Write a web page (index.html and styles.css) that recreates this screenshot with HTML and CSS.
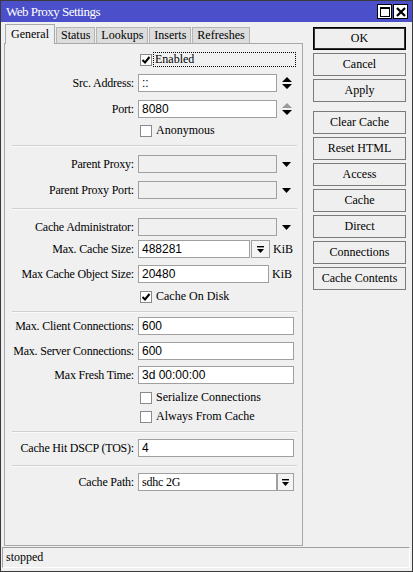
FILE: index.html
```html
<!DOCTYPE html>
<html>
<head>
<meta charset="utf-8">
<link rel="stylesheet" href="styles.css">
</head>
<body>
<div class="window">
  <div class="titlebar">
    <span class="title">Web Proxy Settings</span>
    <div class="tb-btns">
      <span class="tb-btn"><svg width="12" height="12" viewBox="0 0 12 12"><rect x="1.5" y="1.5" width="9" height="9" fill="none" stroke="#000" stroke-width="1"/><rect x="1" y="1" width="10" height="2" fill="#000"/></svg></span>
      <span class="tb-btn"><svg width="12" height="12" viewBox="0 0 12 12"><path d="M2 2 L10 10 M10 2 L2 10" stroke="#000" stroke-width="2.2"/></svg></span>
    </div>
  </div>
  <div class="main">
    <div class="left">
      <div class="tabs">
        <span class="tab active">General</span>
        <span class="tab">Status</span>
        <span class="tab">Lookups</span>
        <span class="tab">Inserts</span>
        <span class="tab">Refreshes</span>
      </div>
      <div class="panel">
        <div class="row cbrow m8 h15">
          <span class="lbl"></span>
          <span class="cb checked"><svg width="10" height="10" viewBox="0 0 10 10"><path d="M1.5 5 L4 7.5 L8.5 2" fill="none" stroke="#000" stroke-width="2"/></svg></span>
          <span class="cblabel focus">Enabled</span>
        </div>
        <div class="row m7">
          <span class="lbl">Src. Address:</span>
          <span class="inp w139">::</span>
          <span class="slot"><svg width="10" height="12" viewBox="0 0 10 12"><path d="M0 5 L5 0 L10 5 Z M0 7 L10 7 L5 12 Z" fill="#000"/></svg></span>
        </div>
        <div class="row m8">
          <span class="lbl">Port:</span>
          <span class="inp w139">8080</span>
          <span class="slot"><svg width="10" height="12" viewBox="0 0 10 12"><path d="M0 5 L5 0 L10 5 Z" fill="#9a9a9a"/><path d="M0 7 L10 7 L5 12 Z" fill="#000"/></svg></span>
        </div>
        <div class="row cbrow m6 h13">
          <span class="lbl"></span>
          <span class="cb"></span>
          <span class="cblabel">Anonymous</span>
        </div>
        <div class="sep m8"></div>
        <div class="row m8">
          <span class="lbl">Parent Proxy:</span>
          <span class="inp w139 dis"></span>
          <span class="slot"><svg width="9" height="5" viewBox="0 0 9 5"><path d="M0 0 L9 0 L4.5 5 Z" fill="#000"/></svg></span>
        </div>
        <div class="row m8">
          <span class="lbl">Parent Proxy Port:</span>
          <span class="inp w139 dis"></span>
          <span class="slot"><svg width="9" height="5" viewBox="0 0 9 5"><path d="M0 0 L9 0 L4.5 5 Z" fill="#000"/></svg></span>
        </div>
        <div class="sep m9"></div>
        <div class="row m8">
          <span class="lbl">Cache Administrator:</span>
          <span class="inp w139 dis"></span>
          <span class="slot"><svg width="9" height="5" viewBox="0 0 9 5"><path d="M0 0 L9 0 L4.5 5 Z" fill="#000"/></svg></span>
        </div>
        <div class="row m4">
          <span class="lbl">Max. Cache Size:</span>
          <span class="inp w112">488281</span>
          <span class="cbtn"><svg width="7" height="7" viewBox="0 0 7 7"><rect x="0" y="0" width="7" height="1.4" fill="#000"/><path d="M0 3 L7 3 L3.5 7 Z" fill="#000"/></svg></span>
          <span class="unit">KiB</span>
        </div>
        <div class="row m7">
          <span class="lbl">Max Cache Object Size:</span>
          <span class="inp w131">20480</span>
          <span class="unit">KiB</span>
        </div>
        <div class="row cbrow m7 h13">
          <span class="lbl"></span>
          <span class="cb checked"><svg width="10" height="10" viewBox="0 0 10 10"><path d="M1.5 5 L4 7.5 L8.5 2" fill="none" stroke="#000" stroke-width="2"/></svg></span>
          <span class="cblabel">Cache On Disk</span>
        </div>
        <div class="sep m8"></div>
        <div class="row m4">
          <span class="lbl">Max. Client Connections:</span>
          <span class="inp w156">600</span>
        </div>
        <div class="row m7">
          <span class="lbl">Max. Server Connections:</span>
          <span class="inp w156">600</span>
        </div>
        <div class="row m6">
          <span class="lbl">Max Fresh Time:</span>
          <span class="inp w156">3d 00:00:00</span>
        </div>
        <div class="row cbrow m7 h13">
          <span class="lbl"></span>
          <span class="cb"></span>
          <span class="cblabel">Serialize Connections</span>
        </div>
        <div class="row cbrow m6 h13">
          <span class="lbl"></span>
          <span class="cb"></span>
          <span class="cblabel">Always From Cache</span>
        </div>
        <div class="sep m8"></div>
        <div class="row m6">
          <span class="lbl">Cache Hit DSCP (TOS):</span>
          <span class="inp w156">4</span>
        </div>
        <div class="sep m8"></div>
        <div class="row m6">
          <span class="lbl">Cache Path:</span>
          <span class="inp w139 serif">sdhc 2G</span>
          <span class="cbtn w17"><svg width="7" height="7" viewBox="0 0 7 7"><rect x="0" y="0" width="7" height="1.4" fill="#000"/><path d="M0 3 L7 3 L3.5 7 Z" fill="#000"/></svg></span>
        </div>
      </div>
    </div>
    <div class="buttons">
      <span class="btn default">OK</span>
      <span class="btn">Cancel</span>
      <span class="btn">Apply</span>
      <span class="btn gap-l">Clear Cache</span>
      <span class="btn">Reset HTML</span>
      <span class="btn">Access</span>
      <span class="btn">Cache</span>
      <span class="btn">Direct</span>
      <span class="btn">Connections</span>
      <span class="btn">Cache Contents</span>
    </div>
  </div>
  <div class="statusbar">
    <div class="status">stopped</div>
  </div>
</div>
</body>
</html>
```
FILE: styles.css
```css
* { box-sizing: border-box; }
html, body { margin: 0; padding: 0; }
body {
  font-family: "Liberation Serif", "Times New Roman", serif;
  font-size: 12px;
  color: #000;
  background: #f0f0f0;
}
.window {
  width: 413px;
  height: 572px;
  border: 1px solid #3a3a3a;
  background: #f0f0f0;
  display: flex;
  flex-direction: column;
}
.titlebar {
  height: 21px;
  background: #4b4fc9;
  display: flex;
  align-items: center;
  justify-content: space-between;
  padding: 0 4px 0 5px;
  flex: none;
}
.title {
  color: #fff;
  font-size: 13px;
  letter-spacing: -0.5px;
}
.tb-btns { display: flex; gap: 1px; }
.tb-btn {
  width: 15px;
  height: 15px;
  background: #fff;
  border: 1px solid #000;
  display: flex;
  align-items: center;
  justify-content: center;
}
.main {
  display: flex;
  height: 524px;
  padding: 2px 0 0 3px;
  flex: none;
}
.left {
  width: 299px;
  display: flex;
  flex-direction: column;
}
.tabs {
  display: flex;
  align-items: flex-end;
  height: 19px;
  padding-left: 1px;
  position: relative;
  z-index: 1;
}
.tab {
  height: 16px;
  line-height: 14px;
  padding: 0 4px;
  background: #dcdcdc;
  border: 1px solid #b4b4b4;
  border-bottom: none;
  margin-right: 1px;
  font-size: 12px;
}
.tab.active {
  height: 20px;
  line-height: 18px;
  background: #f0f0f0;
  border-color: #a8a8a8;
  padding: 0 5px;
  margin-bottom: -1px;
}
.panel {
  flex: 1;
  border: 1px solid #a8a8a8;
  background: #f0f0f0;
  display: flex;
  flex-direction: column;
}
.row {
  display: flex;
  align-items: center;
  height: 18px;
  flex: none;
}
.h15 { height: 15px; }
.h13 { height: 13px; }
.m4 { margin-top: 4px; }
.m6 { margin-top: 6px; }
.m7 { margin-top: 7px; }
.m8 { margin-top: 8px; }
.m9 { margin-top: 9px; }
.lbl {
  width: 133px;
  text-align: right;
  padding-right: 4px;
  white-space: nowrap;
  letter-spacing: -0.2px;
  flex: none;
}
.inp {
  height: 18px;
  background: #fff;
  border: 1px solid #a0a0a0;
  font-family: "Liberation Sans", Arial, sans-serif;
  font-size: 12px;
  line-height: 16px;
  padding-left: 3px;
  white-space: nowrap;
  flex: none;
}
.inp.serif { font-family: "Liberation Serif", serif; letter-spacing: -0.2px; }
.inp.dis { background: #f0f0f0; }
.w139 { width: 139px; }
.w112 { width: 112px; }
.w131 { width: 131px; }
.w156 { width: 156px; }
.slot {
  width: 17px;
  display: flex;
  justify-content: center;
  align-items: center;
  padding-left: 2px;
}
.cbtn {
  width: 19px;
  height: 18px;
  margin-left: 1px;
  border: 1px solid #a0a0a0;
  background: #f4f4f4;
  display: flex;
  align-items: center;
  justify-content: center;
  flex: none;
}
.cbtn.w17 { width: 17px; margin-left: 0; }
.unit {
  margin-left: 3px;
}
.cbrow .lbl { padding: 0; width: 135px; }
.cb {
  width: 12px;
  height: 12px;
  background: #fff;
  border: 1px solid #8a8a8a;
  display: flex;
  align-items: center;
  justify-content: center;
  flex: none;
}
.cblabel {
  margin-left: 3px;
  padding-left: 1px;
  white-space: nowrap;
}
.cblabel.focus {
  width: 143px;
  height: 15px;
  line-height: 13px;
  border: 1px dotted #000;
  margin-left: 1px;
}
.sep {
  height: 2px;
  margin-left: 7px;
  margin-right: 5px;
  border-top: 1px solid #d0d0d0;
  border-bottom: 1px solid #fafafa;
  flex: none;
}
.buttons {
  width: 93px;
  margin-left: 10px;
  padding-top: 3px;
  display: flex;
  flex-direction: column;
  gap: 3px;
}
.btn {
  height: 23px;
  border: 1px solid #7a7a7a;
  background: #efefef;
  display: flex;
  align-items: center;
  justify-content: center;
  flex: none;
}
.btn.default {
  border: 1px solid #000;
  box-shadow: inset 0 0 0 1px #333;
}
.btn.gap-l { margin-top: 6px; }
.statusbar {
  flex: 1;
  padding: 1px 2px 2px 1px;
}
.status {
  height: 21px;
  border: 1px solid #a0a0a0;
  border-right-color: #fff;
  border-bottom-color: #fff;
  line-height: 19px;
  padding-left: 3px;
}
```
